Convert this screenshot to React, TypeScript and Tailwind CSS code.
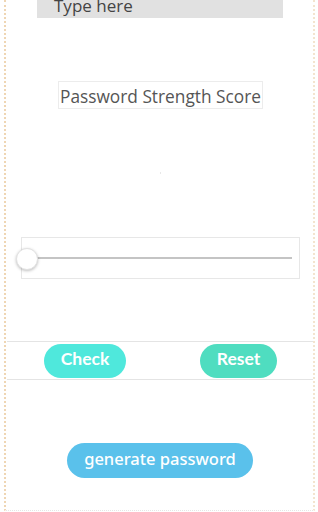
import React from 'react';

export default function App() {
  return (
    <div className="w-[318px] h-[512px] overflow-hidden bg-white">
      <div className="ml-[4px] w-[311px] h-[511px] border-l-2 border-r-2 border-b border-dotted border-l-[#efd6b4] border-r-[#f3e4cf] border-b-[#e6e6e6] flex flex-col" style={{ fontFamily: '"Open Sans", "Noto Sans", sans-serif' }}>
        {/* text input, scrolled partly out of view */}
        <div className="ml-[31px] w-[246px] h-[18px] bg-[#e1e1e1] overflow-hidden">
          <div className="pl-[17px] -mt-[6px] text-[17px] leading-[24px] text-[#444]">Type here</div>
        </div>

        <div className="mt-[63px] ml-[52px] w-[205px] h-[28px] border border-[#ececec] flex items-center pl-[1px] pt-[3px] text-[17.3px] text-[#555] whitespace-nowrap overflow-hidden">
          Password Strength Score
        </div>

        <div className="mt-[63px] ml-[154px] w-[1px] h-[2px] bg-[#e8e8e8]" />

        {/* slider */}
        <div className="mt-[63px] ml-[15px] w-[279px] h-[42px] border border-[#e7e7e7] relative flex items-center">
          <div className="ml-[6px] mr-[7px] flex-1 h-[2px] bg-[#c4c4c4]" />
          <div className="absolute left-[-6px] top-[10px] w-[22px] h-[22px] rounded-full bg-white border border-[#e2e2e2] shadow-[0_1px_3px_rgba(0,0,0,0.25)]" />
        </div>

        {/* actions row */}
        <div className="mt-[62px] ml-[1px] w-[306px] h-[39px] border-t border-b border-[#e4e4e4] flex items-center" style={{ fontFamily: 'Lato, "Noto Sans", sans-serif' }}>
          <button className="ml-[37px] w-[82px] h-[34px] pb-[2px] rounded-full bg-[#4fe8dc] text-white font-bold text-[17.5px]">Check</button>
          <button className="ml-[74px] w-[77px] h-[34px] pb-[2px] rounded-full bg-[#4fddc0] text-white font-bold text-[17.5px]">Reset</button>
        </div>

        <div className="mt-[63px] flex">
          <button className="ml-[61px] w-[186px] h-[35px] pb-[2px] rounded-full bg-[#5ac1eb] text-white font-medium text-[16.5px]" style={{ fontFamily: '"Noto Sans", "Open Sans", sans-serif' }}>
            generate password
          </button>
        </div>
      </div>
    </div>
  );
}
